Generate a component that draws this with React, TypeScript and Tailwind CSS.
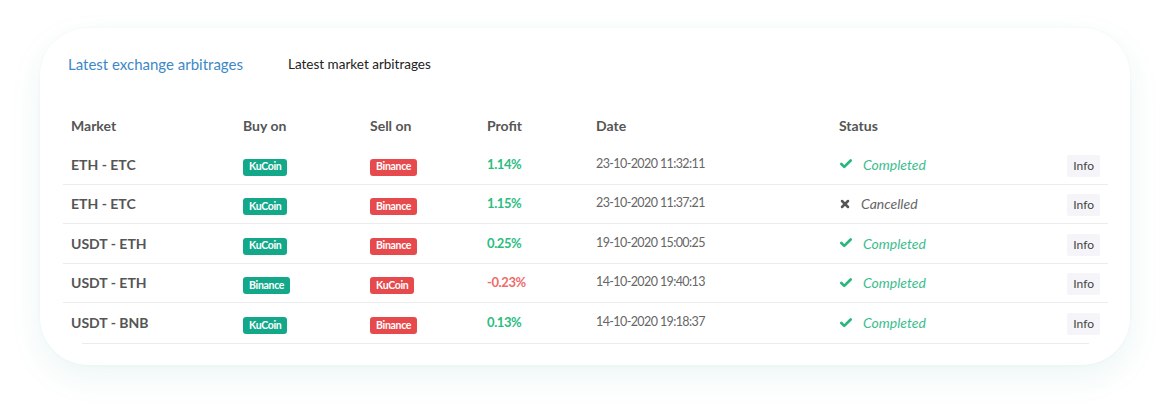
import { Check, X } from 'lucide-react';

type Row = {
  market: string;
  buy: 'KuCoin' | 'Binance';
  sell: 'KuCoin' | 'Binance';
  profit: string;
  date: string;
  done: boolean;
};

const rows: Row[] = [
  { market: 'ETH - ETC', buy: 'KuCoin', sell: 'Binance', profit: '1.14%', date: '23-10-2020 11:32:11', done: true },
  { market: 'ETH - ETC', buy: 'KuCoin', sell: 'Binance', profit: '1.15%', date: '23-10-2020 11:37:21', done: false },
  { market: 'USDT - ETH', buy: 'KuCoin', sell: 'Binance', profit: '0.25%', date: '19-10-2020 15:00:25', done: true },
  { market: 'USDT - ETH', buy: 'Binance', sell: 'KuCoin', profit: '-0.23%', date: '14-10-2020 19:40:13', done: true },
  { market: 'USDT - BNB', buy: 'KuCoin', sell: 'Binance', profit: '0.13%', date: '14-10-2020 19:18:37', done: true },
];

const cols = 'grid grid-cols-[172px_127px_117px_109px_243px_1fr_auto] items-center';

function Badge({ label, tone }: { label: string; tone: 'buy' | 'sell' }) {
  return (
    <span
      className={`inline-flex h-[17px] items-center rounded-[3px] px-[6px] text-[10.5px] font-bold tracking-[-0.3px] text-white ${
        tone === 'buy' ? 'bg-[#13a88a]' : 'bg-[#e64a4d]'
      }`}
    >
      {label}
    </span>
  );
}

export default function App() {
  return (
    <div className="h-[419px] w-[1171px] bg-white pt-[28px] pl-[40px] font-['Lato',sans-serif]">
      {/* Card */}
      <div className="h-[337px] w-[1090px] rounded-[48px] bg-white pl-[23px] pr-[22px] pt-[26px] shadow-[0_12px_32px_rgba(40,150,140,0.09),0_0_3px_rgba(40,150,140,0.06)]">
        {/* Tabs */}
        <div className="flex h-[20px] items-center gap-[45px] pl-[5px]">
          <span className="text-[15px] leading-[20px] text-[#3d88c8]">Latest exchange arbitrages</span>
          <span className="text-[13.5px] leading-[20px] text-[#222]">Latest market arbitrages</span>
        </div>

        {/* Header */}
        <div className={`${cols} mt-[31px] h-[40px] text-[14px] font-bold text-[#555]`}>
          <div className="pl-2">Market</div>
          <div className="pl-2">Buy on</div>
          <div className="pl-2">Sell on</div>
          <div className="pl-2">Profit</div>
          <div className="pl-2">Date</div>
          <div className="pl-2">Status</div>
          <div />
        </div>

        {/* Rows */}
        {rows.map((r, i) => (
          <div
            key={i}
            className={`${cols} h-[39.5px] ${i < rows.length - 1 ? 'border-b border-[#ececec]' : ''}`}
          >
            <div className="pl-2 text-[14px] font-bold text-[#555]">{r.market}</div>
            <div className="pl-2">
              <Badge label={r.buy} tone="buy" />
            </div>
            <div className="pl-2">
              <Badge label={r.sell} tone="sell" />
            </div>
            <div
              className={`pl-2 text-[13px] font-bold tracking-[-0.4px] ${
                r.profit.startsWith('-') ? 'text-[#ef6b6b]' : 'text-[#2bbd80]'
              }`}
            >
              {r.profit}
            </div>
            <div className="pl-2 text-[12.5px] tracking-[-0.6px] text-[#666]">{r.date}</div>
            <div className="flex items-center gap-[10px] pl-2 text-[14px] italic">
              {r.done ? (
                <>
                  <Check size={14} strokeWidth={4.5} className="text-[#25b77c]" />
                  <span className="text-[#3dbd8e]">Completed</span>
                </>
              ) : (
                <>
                  <X size={12} strokeWidth={5} className="text-[#555]" />
                  <span className="text-[#666]">Cancelled</span>
                </>
              )}
            </div>
            <div className="pr-2">
              <button className="h-[22px] rounded-[2px] bg-[#f5f5f9] px-[6px] text-[12px] text-[#444]">Info</button>
            </div>
          </div>
        ))}
        <div className="mx-[19px] h-px bg-[#ececec]" />
      </div>
    </div>
  );
}
